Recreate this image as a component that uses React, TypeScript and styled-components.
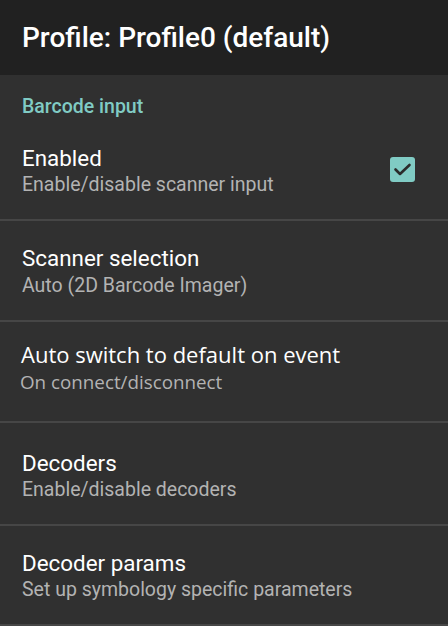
import React from "react";
import styled, { createGlobalStyle } from "styled-components";

const Global = createGlobalStyle`
  html, body { margin: 0; padding: 0; background: #303030; }
  body { font-family: Roboto, "Noto Sans", sans-serif; -webkit-font-smoothing: antialiased; }
`;

const Page = styled.div`
  width: 448px;
  height: 626px;
  background: #303030;
  display: flex;
  flex-direction: column;
  overflow: hidden;
`;

const Header = styled.header`
  height: 75px;
  background: #212121;
  display: flex;
  align-items: center;
  padding: 0 22px;
  box-sizing: border-box;
  flex-shrink: 0;
`;

const Title = styled.h1`
  margin: 0;
  font-family: Roboto, sans-serif;
  font-weight: 500;
  font-size: 28px;
  line-height: 34px;
  color: #ffffff;
`;

const SectionLabel = styled.div`
  height: 43px;
  padding: 21px 22px 0;
  box-sizing: border-box;
  font-size: 19.5px;
  font-weight: 500;
  color: #80cbc4;
  line-height: 22px;
`;

const Row = styled.div<{ $h: number; $pad: number }>`
  height: ${(p) => p.$h}px;
  box-sizing: border-box;
  padding: ${(p) => p.$pad}px 22px 0 22px;
  border-bottom: 2px solid #464646;
  display: flex;
  align-items: flex-start;
  flex-shrink: 0;
`;

const TextCol = styled.div`
  flex: 1;
  display: flex;
  flex-direction: column;
`;

const RowTitle = styled.div<{ $alt?: boolean }>`
  font-family: ${(p) => (p.$alt ? '"Open Sans", sans-serif' : "Roboto, sans-serif")};
  font-size: ${(p) => (p.$alt ? 22 : 22.4)}px;
  line-height: 26px;
  color: #ffffff;
  margin-left: ${(p) => (p.$alt ? -1 : 0)}px;
`;

const RowSub = styled.div<{ $alt?: boolean }>`
  font-family: ${(p) => (p.$alt ? '"Open Sans", sans-serif' : "Roboto, sans-serif")};
  font-size: ${(p) => (p.$alt ? 18.8 : 19.5)}px;
  line-height: 22px;
  color: #b3b3b3;
  margin-top: ${(p) => (p.$alt ? 3.8 : 3.5)}px;
  margin-left: ${(p) => (p.$alt ? -2 : 0)}px;
`;

const Check = styled.div`
  width: 25px;
  height: 25px;
  border-radius: 3px;
  background: #80cbc4;
  margin-top: 12px;
  margin-right: 11px;
  display: flex;
  align-items: center;
  justify-content: center;
`;

const items = [
  { title: "Scanner selection", sub: "Auto (2D Barcode Imager)", h: 101, pad: 24 },
  { title: "Auto switch to default on event", sub: "On connect/disconnect", alt: true, h: 101, pad: 19 },
  { title: "Decoders", sub: "Enable/disable decoders", h: 103, pad: 26.5 },
  { title: "Decoder params", sub: "Set up symbology specific parameters", h: 100, pad: 23.5 },
];

export default function App() {
  return (
    <>
      <Global />
      <Page>
        <Header>
          <Title>Profile: Profile0 (default)</Title>
        </Header>
        <SectionLabel>Barcode input</SectionLabel>
        <Row $h={103} $pad={26.5}>
          <TextCol>
            <RowTitle>Enabled</RowTitle>
            <RowSub>Enable/disable scanner input</RowSub>
          </TextCol>
          <Check>
            <svg width="25" height="25" viewBox="0 0 25 25">
              <path d="M5.5 12.5l4.5 4.5L19.5 8" fill="none" stroke="#2b2b2b" strokeWidth="2.6" strokeLinecap="round" strokeLinejoin="round" />
            </svg>
          </Check>
        </Row>
        {items.map((it) => (
          <Row key={it.title} $h={it.h} $pad={it.pad}>
            <TextCol>
              <RowTitle $alt={it.alt}>{it.title}</RowTitle>
              <RowSub $alt={it.alt}>{it.sub}</RowSub>
            </TextCol>
          </Row>
        ))}
      </Page>
    </>
  );
}
